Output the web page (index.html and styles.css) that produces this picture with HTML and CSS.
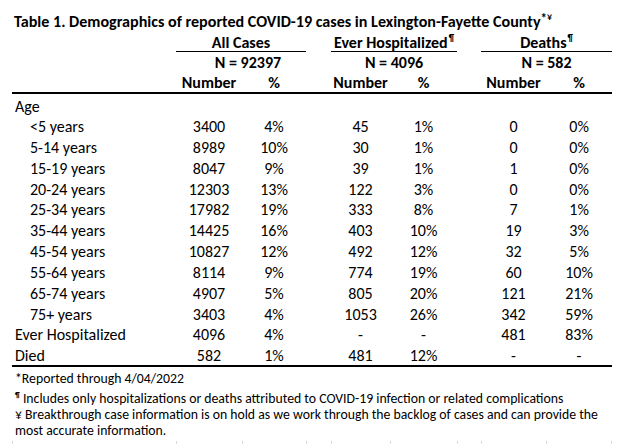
FILE: index.html
```html
<!DOCTYPE html>
<html lang="en">
<head>
<meta charset="utf-8">
<title>Table 1. Demographics of reported COVID-19 cases</title>
<link rel="stylesheet" href="styles.css">
</head>
<body>
<div class="sheet">
  <div class="title">Table 1. Demographics of reported COVID-19 cases in Lexington-Fayette County<sup class="ast">*</sup><sup class="yen">¥</sup></div>
  <table class="tbl">
    <colgroup>
      <col class="c-label"><col class="c-n1"><col class="c-p1"><col class="c-gap1"><col class="c-n2"><col class="c-p2"><col class="c-gap2"><col class="c-n3"><col class="c-p3">
    </colgroup>
    <tr class="r-grp">
      <td></td><td colspan="2" class="grp">All Cases</td><td></td><td colspan="2" class="grp">Ever Hospitalized<sup class="pil">¶</sup></td><td></td><td colspan="2" class="grp">Deaths<sup class="pil">¶</sup></td>
    </tr>
    <tr class="r-n">
      <td></td><td colspan="2" class="nval nval-first">N = 92397</td><td></td><td colspan="2" class="nval">N = 4096</td><td></td><td colspan="2" class="nval">N = 582</td>
    </tr>
    <tr class="r-hdr">
      <td></td><td>Number</td><td>%</td><td></td><td>Number</td><td>%</td><td></td><td>Number</td><td>%</td>
    </tr>
    <tr class="r-age"><td class="lbl">Age</td><td></td><td></td><td></td><td></td><td></td><td></td><td></td><td></td></tr>
    <tr class="r-d"><td class="lbl sub">&lt;5 years</td><td>3400</td><td>4%</td><td></td><td>45</td><td>1%</td><td></td><td>0</td><td>0%</td></tr>
    <tr class="r-d"><td class="lbl sub">5-14 years</td><td>8989</td><td>10%</td><td></td><td>30</td><td>1%</td><td></td><td>0</td><td>0%</td></tr>
    <tr class="r-d"><td class="lbl sub">15-19 years</td><td>8047</td><td>9%</td><td></td><td>39</td><td>1%</td><td></td><td>1</td><td>0%</td></tr>
    <tr class="r-d"><td class="lbl sub">20-24 years</td><td>12303</td><td>13%</td><td></td><td>122</td><td>3%</td><td></td><td>0</td><td>0%</td></tr>
    <tr class="r-d"><td class="lbl sub">25-34 years</td><td>17982</td><td>19%</td><td></td><td>333</td><td>8%</td><td></td><td>7</td><td>1%</td></tr>
    <tr class="r-d"><td class="lbl sub">35-44 years</td><td>14425</td><td>16%</td><td></td><td>403</td><td>10%</td><td></td><td>19</td><td>3%</td></tr>
    <tr class="r-d"><td class="lbl sub">45-54 years</td><td>10827</td><td>12%</td><td></td><td>492</td><td>12%</td><td></td><td>32</td><td>5%</td></tr>
    <tr class="r-d"><td class="lbl sub">55-64 years</td><td>8114</td><td>9%</td><td></td><td>774</td><td>19%</td><td></td><td>60</td><td>10%</td></tr>
    <tr class="r-d"><td class="lbl sub">65-74 years</td><td>4907</td><td>5%</td><td></td><td>805</td><td>20%</td><td></td><td>121</td><td>21%</td></tr>
    <tr class="r-d"><td class="lbl sub">75+ years</td><td>3403</td><td>4%</td><td></td><td>1053</td><td>26%</td><td></td><td>342</td><td>59%</td></tr>
    <tr class="r-d"><td class="lbl">Ever Hospitalized</td><td>4096</td><td>4%</td><td></td><td>-</td><td>-</td><td></td><td>481</td><td>83%</td></tr>
    <tr class="r-last"><td class="lbl">Died</td><td>582</td><td>1%</td><td></td><td>481</td><td>12%</td><td></td><td>-</td><td>-</td></tr>
  </table>
  <div class="notes">
    <p class="fn fn1">*Reported through 4/04/2022</p>
    <p class="fn fn2"><sup class="fpil">¶</sup> Includes only hospitalizations or deaths attributed to COVID-19 infection or related complications</p>
    <p class="fn fn3">¥ Breakthrough case information is on hold as we work through the backlog of cases and can provide the<br>most accurate information.</p>
  </div>
  <div class="grid-ticks">
    <span class="tick t1"></span><span class="tick t2"></span><span class="tick t3"></span><span class="tick t4"></span><span class="tick t5"></span><span class="tick t6"></span><span class="tick t7"></span><span class="tick t8"></span><span class="tick t9"></span>
  </div>
</div>
</body>
</html>
```
FILE: styles.css
```css
html, body {
  margin: 0;
  padding: 0;
  background: #ffffff;
}
body {
  font-family: Carlito, Calibri, Lato, "Liberation Sans", sans-serif;
  color: #000;
  width: 631px;
  height: 444px;
  overflow: hidden;
}
.sheet {
  padding-left: 12px;
}
.title {
  font-weight: bold;
  font-size: 16.1px;
  line-height: 20px;
  padding-top: 12px;
  padding-left: 2px;
  white-space: nowrap;
}
.title sup {
  line-height: 0;
  vertical-align: baseline;
  position: relative;
}
.title .ast {
  font-size: 13px;
  top: -4px;
}
.title .yen {
  font-size: 10px;
  top: -7px;
}
.tbl {
  border-collapse: collapse;
  table-layout: fixed;
  width: 600px;
  font-size: 16px;
}
.c-label { width: 164px; }
.c-n1 { width: 66px; }
.c-p1 { width: 64px; }
.c-gap1 { width: 25px; }
.c-n2 { width: 59px; }
.c-p2 { width: 67px; }
.c-gap2 { width: 24px; }
.c-n3 { width: 65px; }
.c-p3 { width: 66px; }
.tbl td {
  padding: 0;
  text-align: center;
  white-space: nowrap;
  vertical-align: middle;
}
.tbl td.lbl {
  text-align: left;
  padding-left: 3px;
}
.tbl td.sub {
  padding-left: 18px;
}
.r-grp td {
  font-weight: bold;
  line-height: 17px;
  padding-top: 2px;
}
.r-grp td.grp {
  border-bottom: 1px solid #000;
}
.pil {
  font-size: 9px;
  line-height: 0;
  vertical-align: baseline;
  position: relative;
  top: -7px;
  margin-left: 1px;
}
.r-n td {
  font-weight: bold;
  line-height: 22px;
}
.r-n td.nval-first {
  padding-left: 14px;
}
.r-hdr td {
  font-weight: bold;
  line-height: 18px;
  border-bottom: 2px solid #000;
}
.r-age td {
  line-height: 20px;
  padding-top: 3px;
}
.r-d td {
  height: 20.85px;
  line-height: 20.85px;
}
.r-last td {
  line-height: 18px;
  padding-top: 1px;
  border-bottom: 2px solid #000;
}
.notes {
  font-size: 13.75px;
}
.fn {
  margin: 0;
  padding-left: 3px;
  line-height: 16px;
  white-space: nowrap;
}
.fn1 { margin-top: 4px; }
.fn2 { margin-top: 4px; }
.fpil {
  font-size: 8px;
  font-weight: bold;
  line-height: 0;
  vertical-align: baseline;
  position: relative;
  top: -5px;
}
.grid-ticks {
  height: 6px;
  margin-top: 2px;
  display: grid;
  grid-template-columns: 164px 66px 64px 25px 59px 67px 24px 65px 66px;
  width: 600px;
}
.tick {
  border-left: 1px solid #d9d9d9;
  height: 6px;
}
.tick.t9 {
  border-right: 1px solid #d9d9d9;
}
```
